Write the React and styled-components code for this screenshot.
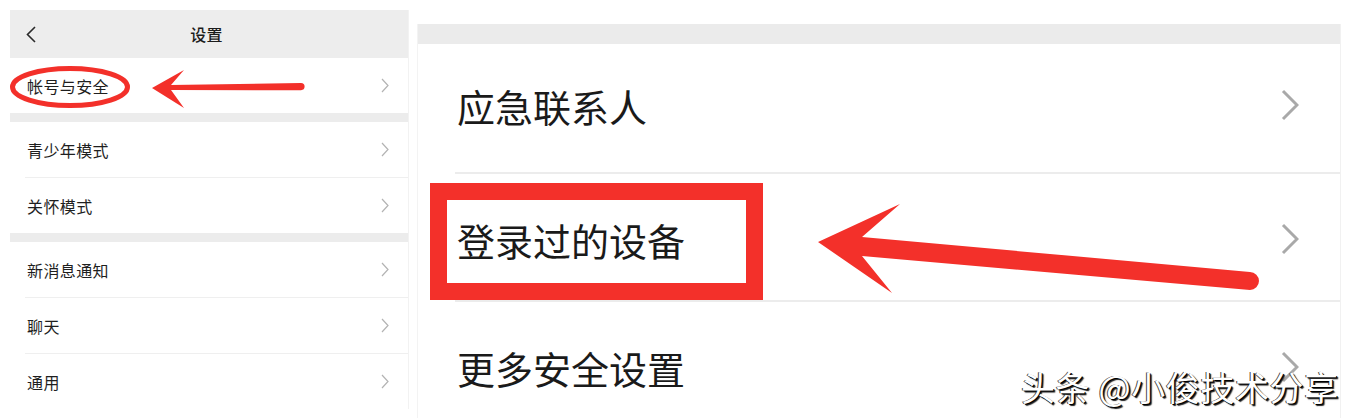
import React from "react";
import styled, { createGlobalStyle } from "styled-components";

const GlobalStyle = createGlobalStyle`
  html, body {
    margin: 0;
    padding: 0;
    background: #ffffff;
  }
  body {
    font-family: "Noto Sans CJK SC", "Noto Sans", sans-serif;
    overflow: hidden;
  }
`;

const RED = "#f3302a";

const Page = styled.div`
  position: relative;
  width: 1351px;
  height: 418px;
  overflow: hidden;
  display: flex;
  align-items: flex-start;
  gap: 10px;
  padding-left: 10px;
  box-sizing: border-box;
`;

const LeftPanel = styled.section`
  width: 398px;
  margin-top: 10px;
  background: #ffffff;
  box-shadow: 1px 0 0 #f2f2f2;
`;

const NavBar = styled.header`
  height: 48px;
  background: #ededed;
  display: flex;
  align-items: center;
  padding-left: 15px;
`;

const NavTitle = styled.h1`
  margin: 0 32px 0 0;
  flex: 1;
  text-align: center;
  font-size: 16px;
  font-weight: 500;
  color: #1c1c1c;
  letter-spacing: 0.3px;
`;

const Gap = styled.div`
  height: 9px;
  background: #ececec;
`;

const SmallRow = styled.div`
  height: 55px;
  display: flex;
  align-items: center;
  justify-content: space-between;
  padding-right: 19px;
  padding-left: ${(p) => (p.divided ? "2px" : "17px")};
  margin-left: ${(p) => (p.divided ? "15px" : "0")};
  border-top: ${(p) => (p.divided ? "1px solid #efefef" : "none")};
  font-size: 16px;
  color: #1f1f1f;
  letter-spacing: 0.4px;
`;

const RightPanel = styled.section`
  width: 922px;
  margin-top: 24px;
  background: #ffffff;
  box-shadow: -1px 0 0 #f3f3f3, 1px 0 0 #f1f1f1;
`;

const TopBand = styled.div`
  height: 20px;
  background: #ebebeb;
`;

const BigRow = styled.div`
  height: 128px;
  display: flex;
  align-items: center;
  justify-content: space-between;
  box-sizing: border-box;
  padding: ${(p) => (p.divided ? "4px 41px 0 0" : "0 41px 6px 0")};
  margin-left: 37px;
  border-top: ${(p) => (p.divided ? "2px solid #ececec" : "none")};
  font-size: 38px;
  color: #1a1a1a;
`;

const BigLabel = styled.span`
  margin-left: 2px;
`;

const Overlay = styled.svg`
  position: absolute;
  inset: 0;
  pointer-events: none;
`;

const Watermark = styled.div`
  position: absolute;
  left: 1021px;
  top: 362px;
  font-size: 34px;
  color: #ffffff;
  letter-spacing: 0.6px;
  text-shadow: 1px 1px 0 #000, 2px 2px 1px #222, -1px 0 0 #444;
  white-space: nowrap;
`;

const Chevron = ({ big }) =>
  big ? (
    <svg width="18" height="32" viewBox="0 0 18 32">
      <polyline points="2,2 16,16 2,30" fill="none" stroke="#a9a9a9" strokeWidth="3" />
    </svg>
  ) : (
    <svg width="8" height="15" viewBox="0 0 8 15">
      <polyline points="1,1 7,7.5 1,14" fill="none" stroke="#b3b3b3" strokeWidth="1.2" />
    </svg>
  );

const BackIcon = () => (
  <svg width="12" height="17" viewBox="0 0 12 17">
    <polyline points="10,1 2.5,8.5 10,16" fill="none" stroke="#2a2a2a" strokeWidth="1.6" />
  </svg>
);

const groups = [
  ["帐号与安全"],
  ["青少年模式", "关怀模式"],
  ["新消息通知", "聊天", "通用"],
];

export default function App() {
  return (
    <>
      <GlobalStyle />
      <Page>
        <LeftPanel>
          <NavBar>
            <BackIcon />
            <NavTitle>设置</NavTitle>
          </NavBar>
          {groups.map((group, gi) => (
            <div key={gi}>
              {gi > 0 && <Gap />}
              {group.map((label, i) => (
                <SmallRow key={label} divided={i > 0}>
                  <span>{label}</span>
                  <Chevron />
                </SmallRow>
              ))}
            </div>
          ))}
        </LeftPanel>

        <RightPanel>
          <TopBand />
          {["应急联系人", "登录过的设备", "更多安全设置"].map((label, i) => (
            <BigRow key={label} divided={i > 0}>
              <BigLabel>{label}</BigLabel>
              <Chevron big />
            </BigRow>
          ))}
        </RightPanel>

        <Overlay width="1351" height="418" viewBox="0 0 1351 418">
          <ellipse cx="70" cy="87" rx="57.5" ry="18.5" fill="none" stroke={RED} strokeWidth="5" />
          <path
            d="M152 88 L184 70 L171 85 L301 83 A3.6 3.6 0 0 1 301 90.2 L171 90 L184 108 Z"
            fill={RED}
          />
          <rect x="438.5" y="191.5" width="316" height="100" fill="none" stroke={RED} strokeWidth="17" />
          <path
            d="M818 242 L900 204 L862 237 L1250 272 A9 9 0 0 1 1250 290 L862 256 L892 293 Z"
            fill={RED}
          />
        </Overlay>

        <Watermark>头条 @小俊技术分享</Watermark>
      </Page>
    </>
  );
}
